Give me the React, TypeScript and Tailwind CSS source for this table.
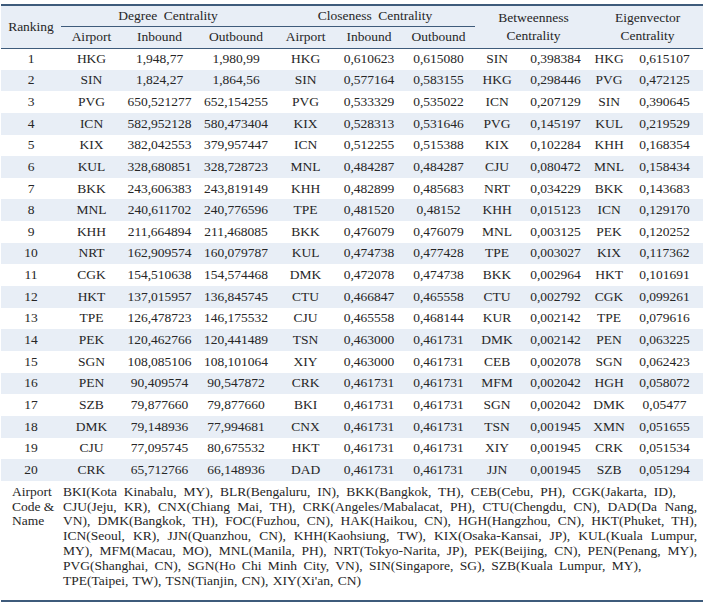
const rows: string[][] = [
  ['1', 'HKG', '1,948,77', '1,980,99', 'HKG', '0,610623', '0,615080', 'SIN', '0,398384', 'HKG', '0,615107'],
  ['2', 'SIN', '1,824,27', '1,864,56', 'SIN', '0,577164', '0,583155', 'HKG', '0,298446', 'PVG', '0,472125'],
  ['3', 'PVG', '650,521277', '652,154255', 'PVG', '0,533329', '0,535022', 'ICN', '0,207129', 'SIN', '0,390645'],
  ['4', 'ICN', '582,952128', '580,473404', 'KIX', '0,528313', '0,531646', 'PVG', '0,145197', 'KUL', '0,219529'],
  ['5', 'KIX', '382,042553', '379,957447', 'ICN', '0,512255', '0,515388', 'KIX', '0,102284', 'KHH', '0,168354'],
  ['6', 'KUL', '328,680851', '328,728723', 'MNL', '0,484287', '0,484287', 'CJU', '0,080472', 'MNL', '0,158434'],
  ['7', 'BKK', '243,606383', '243,819149', 'KHH', '0,482899', '0,485683', 'NRT', '0,034229', 'BKK', '0,143683'],
  ['8', 'MNL', '240,611702', '240,776596', 'TPE', '0,481520', '0,48152', 'KHH', '0,015123', 'ICN', '0,129170'],
  ['9', 'KHH', '211,664894', '211,468085', 'BKK', '0,476079', '0,476079', 'MNL', '0,003125', 'PEK', '0,120252'],
  ['10', 'NRT', '162,909574', '160,079787', 'KUL', '0,474738', '0,477428', 'TPE', '0,003027', 'KIX', '0,117362'],
  ['11', 'CGK', '154,510638', '154,574468', 'DMK', '0,472078', '0,474738', 'BKK', '0,002964', 'HKT', '0,101691'],
  ['12', 'HKT', '137,015957', '136,845745', 'CTU', '0,466847', '0,465558', 'CTU', '0,002792', 'CGK', '0,099261'],
  ['13', 'TPE', '126,478723', '146,175532', 'CJU', '0,465558', '0,468144', 'KUR', '0,002142', 'TPE', '0,079616'],
  ['14', 'PEK', '120,462766', '120,441489', 'TSN', '0,463000', '0,461731', 'DMK', '0,002142', 'PEN', '0,063225'],
  ['15', 'SGN', '108,085106', '108,101064', 'XIY', '0,463000', '0,461731', 'CEB', '0,002078', 'SGN', '0,062423'],
  ['16', 'PEN', '90,409574', '90,547872', 'CRK', '0,461731', '0,461731', 'MFM', '0,002042', 'HGH', '0,058072'],
  ['17', 'SZB', '79,877660', '79,877660', 'BKI', '0,461731', '0,461731', 'SGN', '0,002042', 'DMK', '0,05477'],
  ['18', 'DMK', '79,148936', '77,994681', 'CNX', '0,461731', '0,461731', 'TSN', '0,001945', 'XMN', '0,051655'],
  ['19', 'CJU', '77,095745', '80,675532', 'HKT', '0,461731', '0,461731', 'XIY', '0,001945', 'CRK', '0,051534'],
  ['20', 'CRK', '65,712766', '66,148936', 'DAD', '0,461731', '0,461731', 'JJN', '0,001945', 'SZB', '0,051294'],
];

// each footnote line with its own spacing so the breaks fall as in the print
const footLines: { text: string; cls: string }[] = [
  { text: 'BKI(Kota Kinabalu, MY), BLR(Bengaluru, IN), BKK(Bangkok, TH), CEB(Cebu, PH), CGK(Jakarta, ID),', cls: '[word-spacing:3.5px]' },
  { text: 'CJU(Jeju, KR), CNX(Chiang Mai, TH), CRK(Angeles/Mabalacat, PH), CTU(Chengdu, CN), DAD(Da Nang,', cls: '[text-align-last:justify]' },
  { text: 'VN), DMK(Bangkok, TH), FOC(Fuzhou, CN), HAK(Haikou, CN), HGH(Hangzhou, CN), HKT(Phuket, TH),', cls: '[text-align-last:justify]' },
  { text: 'ICN(Seoul, KR), JJN(Quanzhou, CN), KHH(Kaohsiung, TW), KIX(Osaka-Kansai, JP), KUL(Kuala Lumpur,', cls: '[text-align-last:justify]' },
  { text: 'MY), MFM(Macau, MO), MNL(Manila, PH), NRT(Tokyo-Narita, JP), PEK(Beijing, CN), PEN(Penang, MY),', cls: '[text-align-last:justify]' },
  { text: 'PVG(Shanghai, CN), SGN(Ho Chi Minh City, VN), SIN(Singapore, SG), SZB(Kuala Lumpur, MY),', cls: '[word-spacing:3px]' },
  { text: "TPE(Taipei, TW), TSN(Tianjin, CN), XIY(Xi'an, CN)", cls: '[word-spacing:1px]' },
];

const widths = [60, 61, 75, 78, 61, 66, 73, 44, 73, 34, 77];

export default function App() {
  return (
    <div className="w-[712px] h-[607px] bg-white pt-[4px] pl-[1px] font-[family-name:'Liberation_Serif',serif] text-[13.5px] text-[#262626]">
      <table className="w-[702px] table-fixed border-collapse">
        <colgroup>
          {widths.map((w, i) => (
            <col key={i} style={{ width: w }} />
          ))}
        </colgroup>
        <thead className="bg-[#e8eef6]">
          <tr className="h-[21px] border-t-2 border-[#3e5b7b]">
            <th rowSpan={2} className="font-normal text-center align-middle">Ranking</th>
            <th colSpan={3} className="font-normal text-center border-b border-[#3e5b7b] [word-spacing:3px]">Degree Centrality</th>
            <th colSpan={3} className="font-normal text-center border-b border-[#3e5b7b] [word-spacing:3px]">Closeness Centrality</th>
            <th colSpan={2} rowSpan={2} className="font-normal text-center leading-[18px]">
              Betweenness<br />Centrality
            </th>
            <th colSpan={2} rowSpan={2} className="font-normal text-center leading-[18px]">
              Eigenvector<br />Centrality
            </th>
          </tr>
          <tr className="h-[21px] border-b border-[#3e5b7b]">
            <th className="font-normal text-center">Airport</th>
            <th className="font-normal text-center">Inbound</th>
            <th className="font-normal text-center">Outbound</th>
            <th className="font-normal text-center">Airport</th>
            <th className="font-normal text-center">Inbound</th>
            <th className="font-normal text-center">Outbound</th>
          </tr>
        </thead>
        <tbody>
          {rows.map((r, i) => (
            <tr key={r[0]} className={i % 2 === 1 ? 'h-[21.65px] bg-[#e8eef6]' : 'h-[21.65px] bg-white'}>
              {r.map((c, j) => (
                <td key={j} className="p-0 text-center align-middle whitespace-nowrap">{c}</td>
              ))}
            </tr>
          ))}
        </tbody>
        <tfoot>
          <tr className="border-b-2 border-[#3e5b7b]">
            <td className="align-top pl-[11px] pt-[4px] pb-[12px] leading-[14.8px]">
              <div>Airport</div>
              <div>Code &amp;</div>
              <div>Name</div>
            </td>
            <td colSpan={10} className="align-top pl-[2px] pr-[6px] pt-[4px] pb-[12px] leading-[14.8px]">
              {footLines.map((l, i) => (
                <div key={i} className={`whitespace-nowrap text-justify ${l.cls}`}>
                  {l.text}
                </div>
              ))}
            </td>
          </tr>
        </tfoot>
      </table>
    </div>
  );
}
